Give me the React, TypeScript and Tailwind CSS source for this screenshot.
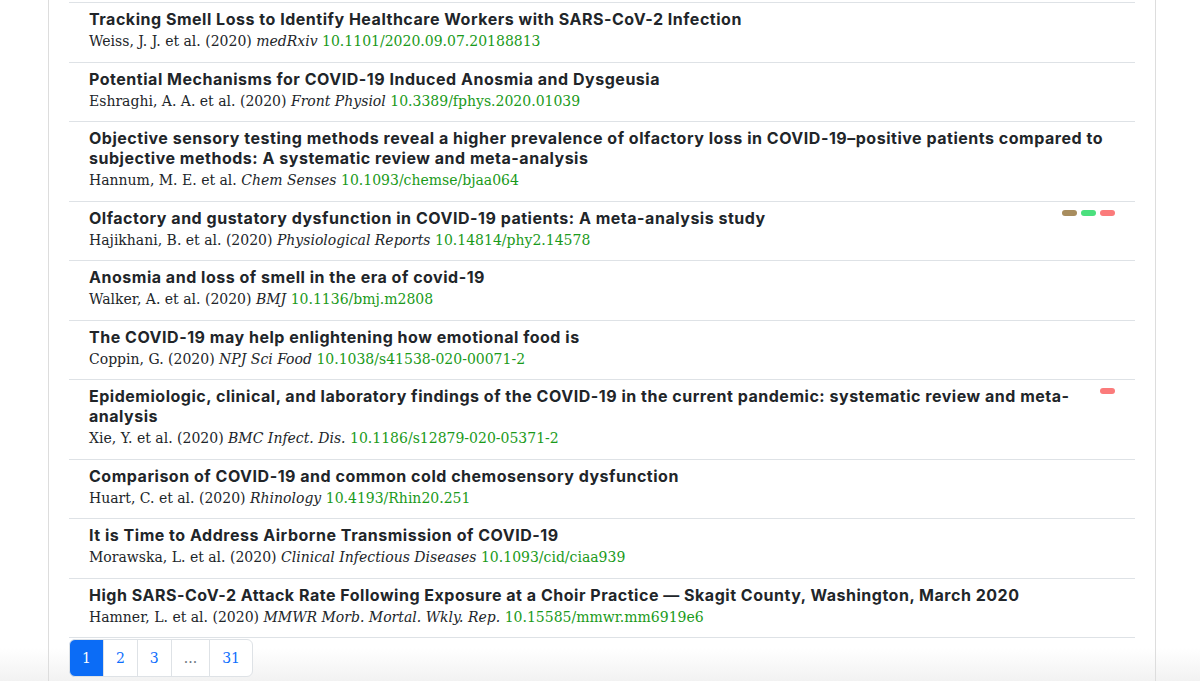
import React from 'react';

interface Paper {
  title: string;
  authors: string;
  journal: string;
  doi: string;
  tags?: string[];
}

const papers: Paper[] = [
  {
    title: 'Tracking Smell Loss to Identify Healthcare Workers with SARS-CoV-2 Infection',
    authors: 'Weiss, J. J. et al. (2020)',
    journal: 'medRxiv',
    doi: '10.1101/2020.09.07.20188813',
  },
  {
    title: 'Potential Mechanisms for COVID-19 Induced Anosmia and Dysgeusia',
    authors: 'Eshraghi, A. A. et al. (2020)',
    journal: 'Front Physiol',
    doi: '10.3389/fphys.2020.01039',
  },
  {
    title:
      'Objective sensory testing methods reveal a higher prevalence of olfactory loss in COVID-19–positive patients compared to subjective methods: A systematic review and meta-analysis',
    authors: 'Hannum, M. E. et al.',
    journal: 'Chem Senses',
    doi: '10.1093/chemse/bjaa064',
  },
  {
    title: 'Olfactory and gustatory dysfunction in COVID-19 patients: A meta-analysis study',
    authors: 'Hajikhani, B. et al. (2020)',
    journal: 'Physiological Reports',
    doi: '10.14814/phy2.14578',
    tags: ['bg-[#a88d5e]', 'bg-[#4be07e]', 'bg-[#fb7b7b]'],
  },
  {
    title: 'Anosmia and loss of smell in the era of covid-19',
    authors: 'Walker, A. et al. (2020)',
    journal: 'BMJ',
    doi: '10.1136/bmj.m2808',
  },
  {
    title: 'The COVID-19 may help enlightening how emotional food is',
    authors: 'Coppin, G. (2020)',
    journal: 'NPJ Sci Food',
    doi: '10.1038/s41538-020-00071-2',
  },
  {
    title:
      'Epidemiologic, clinical, and laboratory findings of the COVID-19 in the current pandemic: systematic review and meta-analysis',
    authors: 'Xie, Y. et al. (2020)',
    journal: 'BMC Infect. Dis.',
    doi: '10.1186/s12879-020-05371-2',
    tags: ['bg-[#fb7b7b]'],
  },
  {
    title: 'Comparison of COVID-19 and common cold chemosensory dysfunction',
    authors: 'Huart, C. et al. (2020)',
    journal: 'Rhinology',
    doi: '10.4193/Rhin20.251',
  },
  {
    title: 'It is Time to Address Airborne Transmission of COVID-19',
    authors: 'Morawska, L. et al. (2020)',
    journal: 'Clinical Infectious Diseases',
    doi: '10.1093/cid/ciaa939',
  },
  {
    title:
      'High SARS-CoV-2 Attack Rate Following Exposure at a Choir Practice — Skagit County, Washington, March 2020',
    authors: 'Hamner, L. et al. (2020)',
    journal: 'MMWR Morb. Mortal. Wkly. Rep.',
    doi: '10.15585/mmwr.mm6919e6',
  },
];

const serif = "font-['DejaVu_Serif',serif]";

const PaperRow: React.FC<{ paper: Paper }> = ({ paper }) => (
  <li className="border-t border-[#dee2e6] px-5 pt-[6px] pb-[8.5px]">
    {paper.tags && (
      <div className="float-right flex gap-[4px] pt-[2px] pl-3">
        {paper.tags.map((c, i) => (
          <span key={i} className={`block w-[15px] h-[6px] rounded-full ${c}`} />
        ))}
      </div>
    )}
    <h5 className="font-['Inter',sans-serif] font-bold text-[16px] leading-[20px] text-[#212529] tracking-[0.52px]">
      {paper.title}
    </h5>
    <p className={`${serif} text-[14px] leading-[24px] text-[#212529]`}>
      {paper.authors} <em>{paper.journal}</em>{' '}
      <a className="text-[#1a9a1a]">{paper.doi}</a>
    </p>
  </li>
);

const pages = ['1', '2', '3', '...', '31'];

export default function App() {
  return (
    <div className="h-[681px] overflow-hidden bg-[linear-gradient(to_bottom,#ffffff_648px,#f2f2f2_681px)]">
      <div className="ml-12 w-[1108px] h-full border-x border-[#dddddd] px-5 pt-[2px]">
        <ul className="border-b border-[#dee2e6]">
          {papers.map((p, i) => (
            <PaperRow key={i} paper={p} />
          ))}
        </ul>
        <nav className="mt-[1px] flex">
          {pages.map((p, i) => {
            const active = i === 0;
            const dots = p === '...';
            return (
              <span
                key={p}
                className={`${serif} text-[14px] leading-[24px] py-1.5 px-3 border border-[#dee2e6] ${
                  i > 0 ? '-ml-px' : ''
                } ${i === 0 ? 'rounded-l-md' : ''} ${i === pages.length - 1 ? 'rounded-r-md' : ''} ${
                  active
                    ? 'bg-[#0b6cf6] border-[#0b6cf6] text-white'
                    : dots
                    ? 'text-[#6c757d] text-[11px] bg-white'
                    : 'text-[#0d6efd] bg-white'
                }`}
              >
                {p}
              </span>
            );
          })}
        </nav>
      </div>
    </div>
  );
}
